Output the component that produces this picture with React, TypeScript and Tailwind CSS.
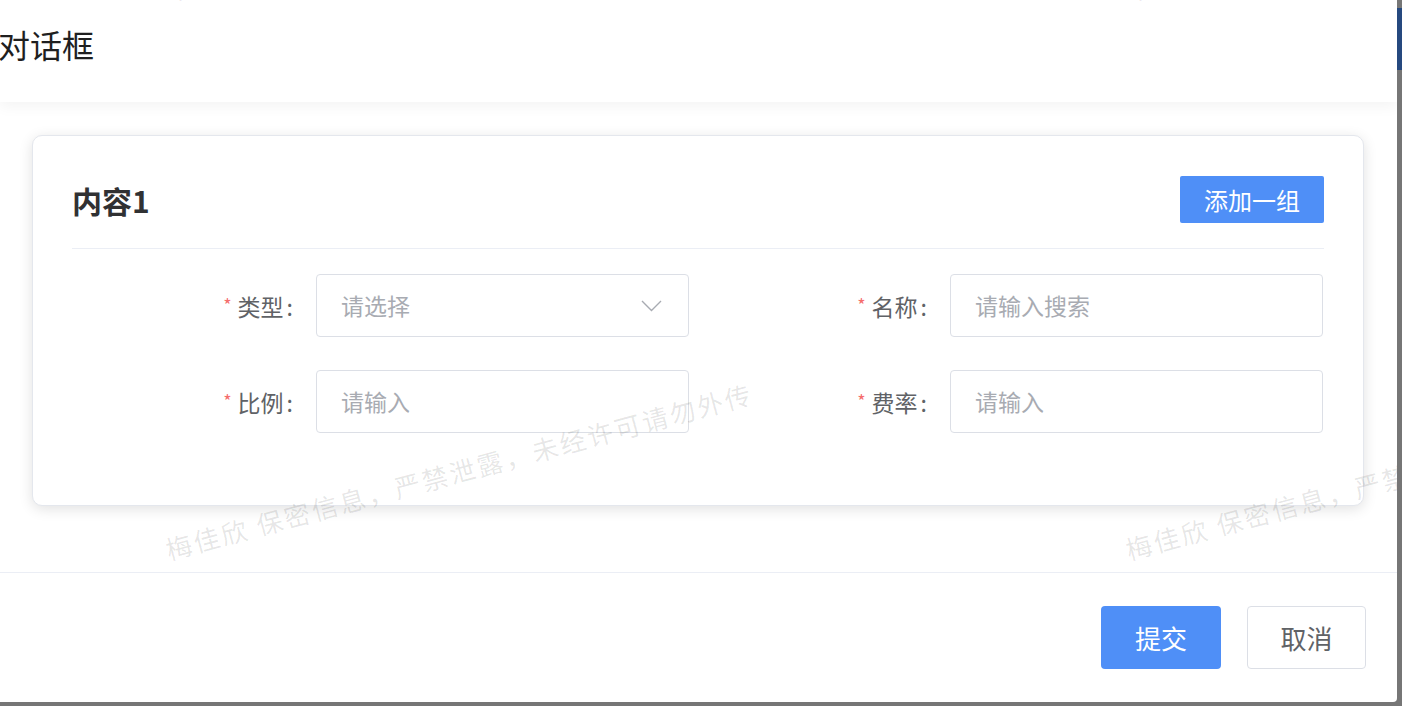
import React from "react";

const WM = "梅佳欣 保密信息，严禁泄露，未经许可请勿外传";

function Label({ text, w }: { text: string; w: string }) {
  return (
    <div className={`${w} shrink-0 flex items-center justify-end pr-[23px] text-[23px] leading-[30px] text-[#606266]`}>
      <span className="text-[#f56c6c] text-[18px] leading-[18px] mr-[6px] -mt-[4px]">*</span>
      <span>{text}</span>
      <span className="ml-[3px]">:</span>
    </div>
  );
}

function Input({ placeholder, select }: { placeholder: string; select?: boolean }) {
  return (
    <div className="w-[373px] h-[63px] shrink-0 border border-[#dcdfe6] rounded-[4px] flex items-center justify-between pl-[24px] pr-[26px] bg-white">
      <span className="text-[23px] leading-[30px] -mt-[1px] text-[#a8abb2]">{placeholder}</span>
      {select && (
        <svg width="21" height="12" viewBox="0 0 21 12" fill="none">
          <path d="M1 1 L10.5 10.5 L20 1" stroke="#a8abb2" strokeWidth="1.4" />
        </svg>
      )}
    </div>
  );
}

export default function App() {
  return (
    <div className="w-[1402px] h-[706px] bg-[#767676] flex overflow-hidden font-['Noto_Sans_CJK_SC','Noto_Sans',sans-serif]">
      <div className="relative w-[1397px] h-[702px] shrink-0 bg-white rounded-br-[4px] flex flex-col overflow-hidden">
        {/* header */}
        <div className="relative z-10 h-[102px] shrink-0 bg-white shadow-[0_4px_14px_rgba(0,0,0,0.05)] pt-[21px]">
          <div className="-ml-[2px] text-[32px] leading-[46px] text-[#1f1f1f]">对话框</div>
        </div>
        {/* body */}
        <div className="h-[470px] shrink-0 pl-[32px] pr-[33px] pt-[33px]">
          <div className="h-[371px] border border-[#e4e7ed] rounded-[10px] bg-white shadow-[0_3px_14px_rgba(0,0,0,0.12)] px-[39px] pt-[40px]">
            <div className="h-[47px] flex items-center justify-between">
              <div className="text-[30px] leading-[38px] font-bold text-[#303133]">内容1</div>
              <button className="w-[144px] h-[47px] bg-[#4f8ff7] rounded-[2px] text-white text-[24px] leading-[30px]">
                添加一组
              </button>
            </div>
            <div className="mt-[25px] h-px bg-[#ebeef5]" />
            <div className="mt-[25px] flex flex-col gap-[33px]">
              <div className="flex">
                <div className="w-[626px] flex">
                  <Label text="类型" w="w-[244px]" />
                  <Input placeholder="请选择" select />
                </div>
                <div className="flex">
                  <Label text="名称" w="w-[252px]" />
                  <Input placeholder="请输入搜索" />
                </div>
              </div>
              <div className="flex">
                <div className="w-[626px] flex">
                  <Label text="比例" w="w-[244px]" />
                  <Input placeholder="请输入" />
                </div>
                <div className="flex">
                  <Label text="费率" w="w-[252px]" />
                  <Input placeholder="请输入" />
                </div>
              </div>
            </div>
          </div>
        </div>
        {/* footer */}
        <div className="flex-1 border-t border-[#ebeef5] pt-[33px] pr-[31px] flex justify-end items-start gap-[26px]">
          <button className="w-[120px] h-[63px] rounded-[4px] bg-[#4f8ff7] text-white text-[26px] leading-[34px]">
            提交
          </button>
          <button className="w-[119px] h-[63px] rounded-[4px] border border-[#dcdfe6] bg-white text-[#606266] text-[26px] leading-[34px]">
            取消
          </button>
        </div>
        {/* watermark overlay */}
        <div className="absolute inset-0 pointer-events-none overflow-hidden z-20">
          <span className="absolute left-[170px] top-[534px] whitespace-nowrap origin-bottom-left -rotate-[15deg] text-[26px] leading-[30px] tracking-[2.5px] text-black/[0.1]">
            {WM}
          </span>
          <span className="absolute left-[1130px] top-[534px] whitespace-nowrap origin-bottom-left -rotate-[15deg] text-[26px] leading-[30px] tracking-[2.5px] text-black/[0.1]">
            {WM}
          </span>
          <span className="absolute left-[176px] top-[-26px] whitespace-nowrap origin-bottom-left -rotate-[15deg] text-[26px] leading-[30px] tracking-[2.5px] text-black/[0.1]">
            {WM}
          </span>
          <span className="absolute left-[1136px] top-[-26px] whitespace-nowrap origin-bottom-left -rotate-[15deg] text-[26px] leading-[30px] tracking-[2.5px] text-black/[0.1]">
            {WM}
          </span>
        </div>
      </div>
      <div className="flex-1 pt-[8px]">
        <div className="h-[62px] bg-[#26497f]" />
      </div>
    </div>
  );
}
